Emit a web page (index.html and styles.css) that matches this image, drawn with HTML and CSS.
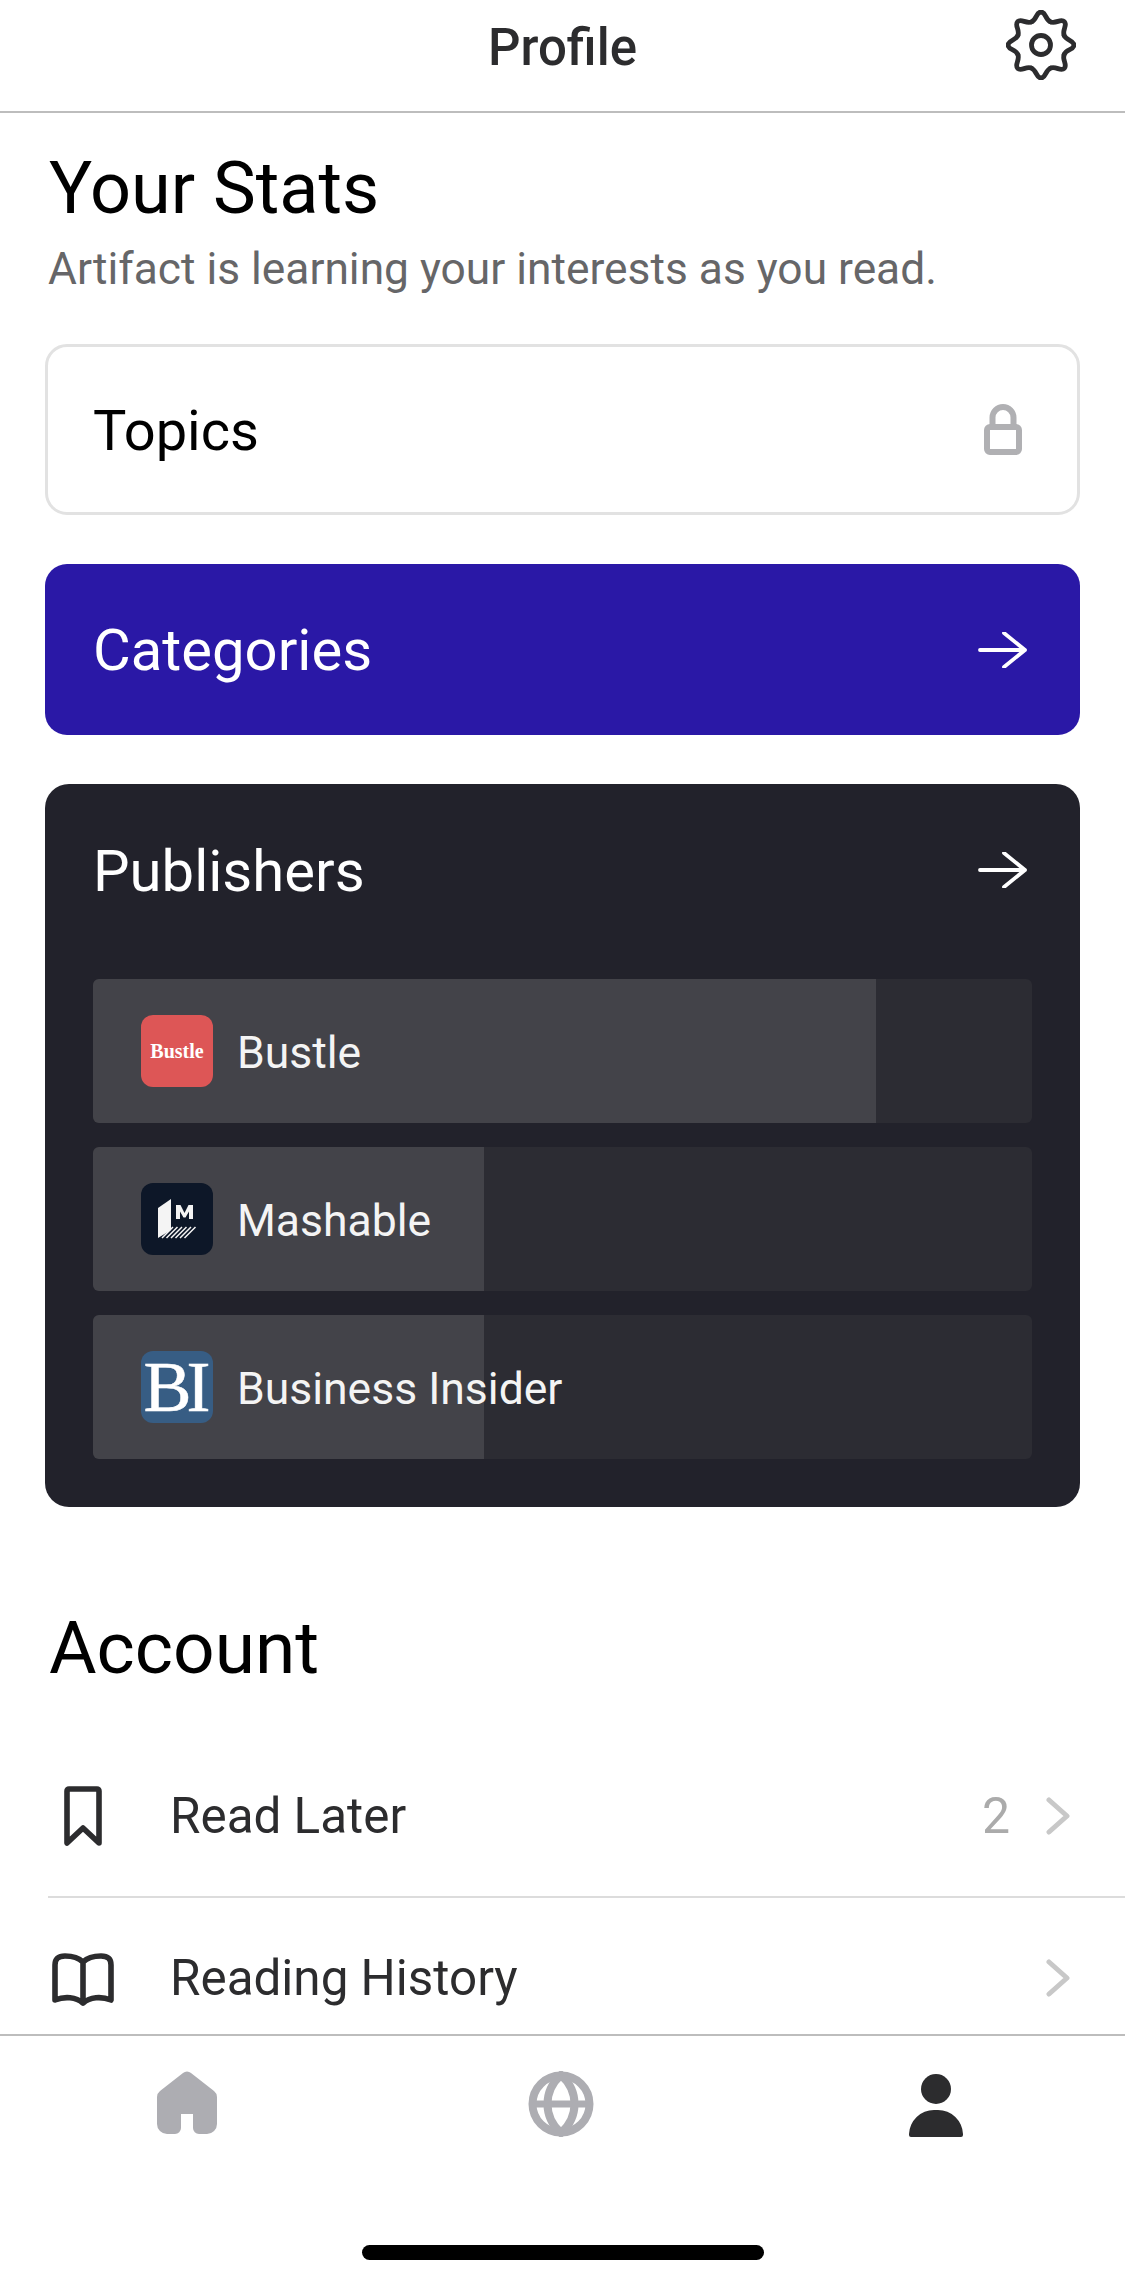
FILE: index.html
```html
<!DOCTYPE html>
<html lang="en">
<head>
    <meta charset="UTF-8">
    <meta name="viewport" content="width=device-width, initial-scale=1.0">
    <title>Profile</title>
    <link rel="stylesheet" href="styles.css">
</head>
<body>
    <div class="app">
        <header class="top-bar">
            <h2>Profile</h2>
            <svg class="gear-icon" viewBox="0 0 70 70" fill="none" stroke="#2c2c2e" stroke-width="4.8" stroke-linecap="round">
                <defs>
                    <path id="gearTooth" d="M25.4 11.9C30.9 9.6 30 2 35 2C40 2 39.1 9.6 44.6 11.9"/>
                </defs>
                <use href="#gearTooth"/>
                <use href="#gearTooth" transform="rotate(45 35 35)"/>
                <use href="#gearTooth" transform="rotate(90 35 35)"/>
                <use href="#gearTooth" transform="rotate(135 35 35)"/>
                <use href="#gearTooth" transform="rotate(180 35 35)"/>
                <use href="#gearTooth" transform="rotate(225 35 35)"/>
                <use href="#gearTooth" transform="rotate(270 35 35)"/>
                <use href="#gearTooth" transform="rotate(315 35 35)"/>
                <circle cx="35" cy="35" r="9.5"/>
            </svg>
        </header>

        <main class="content">
            <h1 class="stats-title">Your Stats</h1>
            <p class="stats-sub">Artifact is learning your interests as you read.</p>

            <div class="card card-topics">
                <span>Topics</span>
                <svg class="lock-icon" viewBox="0 0 38 52" fill="none" stroke="#b0b0b3" stroke-width="6" stroke-linejoin="round">
                    <path d="M8.5 23V13.5a10.5 10.5 0 0 1 21 0V23"/>
                    <rect x="3" y="23" width="32" height="25" rx="3"/>
                </svg>
            </div>

            <div class="card card-categories">
                <span>Categories</span>
                <svg class="arrow-icon" viewBox="0 0 50 36" fill="none" stroke="#fff" stroke-width="3.8" stroke-linecap="round" stroke-linejoin="round">
                    <path d="M2 18H47M26 1L47 18L26 35"/>
                </svg>
            </div>

            <div class="publishers">
                <div class="publishers-head">
                    <span>Publishers</span>
                    <svg class="arrow-icon" viewBox="0 0 50 36" fill="none" stroke="#fff" stroke-width="3.8" stroke-linecap="round" stroke-linejoin="round">
                        <path d="M2 18H47M26 1L47 18L26 35"/>
                    </svg>
                </div>

                <div class="pub-row">
                    <div class="pub-fill" style="width: 783px"></div>
                    <div class="pub-logo logo-bustle">Bustle</div>
                    <span class="pub-name">Bustle</span>
                </div>
                <div class="pub-row">
                    <div class="pub-fill" style="width: 391px"></div>
                    <div class="pub-logo logo-mashable">
                        <svg viewBox="0 0 72 72" width="72" height="72">
                            <path d="M17 25L30 16V47L17 55Z" fill="#f4f4f4"/>
                            <path d="M35 22H39.5L43.5 30L47.5 22H52V36H48V28.5L44.5 34.5H42.5L39 28.5V36H35Z" fill="#f4f4f4"/>
                            <path d="M21 55L32 44M25.5 55L36.5 44M30 55L41 44M34.5 55L45.5 44M39 55L50 44M43.5 55L54.5 44" stroke="#f4f4f4" stroke-width="1.5"/>
                        </svg>
                    </div>
                    <span class="pub-name">Mashable</span>
                </div>
                <div class="pub-row">
                    <div class="pub-fill" style="width: 391px"></div>
                    <div class="pub-logo logo-bi">BI</div>
                    <span class="pub-name">Business Insider</span>
                </div>
            </div>

            <h1 class="account-title">Account</h1>

            <div class="account-list">
                <div class="list-row">
                    <svg class="row-icon" viewBox="0 0 62 62" fill="none" stroke="#2c2c2e" stroke-width="5.6" stroke-linejoin="round">
                        <path d="M17 4H45a2 2 0 0 1 2 2V58L31 43L15 58V6a2 2 0 0 1 2-2Z"/>
                    </svg>
                    <span class="row-label">Read Later</span>
                    <span class="row-count">2</span>
                    <svg class="chevron" viewBox="0 0 24 38" fill="none" stroke="#c8c8c8" stroke-width="5" stroke-linecap="round" stroke-linejoin="round">
                        <path d="M3 3L21 19L3 35"/>
                    </svg>
                </div>
                <div class="list-row">
                    <svg class="row-icon" viewBox="0 0 62 62" fill="none" stroke="#2c2c2e" stroke-width="5.6" stroke-linejoin="round">
                        <path d="M31 15C27 11 21 9 13 9C6 9 3 12 3 18V53C13 49 24 50 31 56C38 50 49 49 59 53V18C59 12 56 9 49 9C41 9 35 11 31 15ZM31 15V54"/>
                    </svg>
                    <span class="row-label">Reading History</span>
                    <svg class="chevron" viewBox="0 0 24 38" fill="none" stroke="#c8c8c8" stroke-width="5" stroke-linecap="round" stroke-linejoin="round">
                        <path d="M3 3L21 19L3 35"/>
                    </svg>
                </div>
            </div>
        </main>

        <nav class="tab-bar">
            <div class="tabs">
                <div class="tab">
                    <svg class="tab-icon icon-home" viewBox="0 0 60 63" fill="#adadb2">
                        <path d="M26 2a6 6 0 0 1 8 0L57 20a8 8 0 0 1 3 6V53a10 10 0 0 1-10 10H42a6 6 0 0 1-6-6V43H24V57a6 6 0 0 1-6 6H10A10 10 0 0 1 0 53V26a8 8 0 0 1 3-6Z"/>
                    </svg>
                </div>
                <div class="tab">
                    <svg class="tab-icon" viewBox="0 0 66 66" fill="none" stroke="#adadb2" stroke-width="8">
                        <circle cx="33" cy="33" r="28.5"/>
                        <path d="M33 4C15 20 15 46 33 62C51 46 51 20 33 4Z"/>
                        <path d="M4 33H62" stroke-width="7"/>
                    </svg>
                </div>
                <div class="tab">
                    <svg class="tab-icon" viewBox="0 0 54 66" fill="#2c2c2e">
                        <circle cx="27" cy="18" r="15"/>
                        <path d="M0 63a25 25 0 0 1 25-24h4a25 25 0 0 1 25 24v1a2 2 0 0 1-2 2H2a2 2 0 0 1-2-2Z"/>
                    </svg>
                </div>
            </div>
            <div class="home-bar"></div>
        </nav>
    </div>
</body>
</html>
```

FILE: styles.css
```css
* {
  margin: 0;
  padding: 0;
  box-sizing: border-box;
  font-family: Roboto, "Liberation Sans", sans-serif;
}

body {
  background-color: #fff;
}

.app {
  width: 1125px;
  height: 2284px;
  display: flex;
  flex-direction: column;
  overflow: hidden;
}

.top-bar {
  height: 113px;
  flex-shrink: 0;
  display: flex;
  align-items: center;
  justify-content: center;
  position: relative;
  padding-bottom: 16px;
  border-bottom: 2px solid #bdbdbd;
}

.top-bar h2 {
  font-size: 51px;
  font-weight: 500;
  color: #2c2c2e;
}

.gear-icon {
  position: absolute;
  right: 49px;
  top: 10px;
  width: 70px;
  height: 70px;
}

.content {
  flex: 1;
  overflow: hidden;
  padding: 0 45px;
}

.stats-title {
  font-size: 72px;
  font-weight: 400;
  color: #000;
  line-height: 80px;
  margin-top: 36px;
  padding-left: 4px;
}

.stats-sub {
  font-size: 44.3px;
  color: #666668;
  line-height: 56px;
  margin-top: 12px;
  padding-left: 3px;
}

.card {
  height: 171px;
  border-radius: 22px;
  display: flex;
  align-items: center;
  justify-content: space-between;
  padding: 0 48px;
  font-size: 58px;
}

.card-topics {
  margin-top: 47px;
  padding-left: 45px;
  padding-top: 2px;
  border: 3px solid #e2e2e2;
  color: #000;
  font-size: 56px;
}

.lock-icon {
  width: 38px;
  height: 52px;
  margin-right: 7px;
  margin-bottom: 2px;
}

.card-categories {
  margin-top: 49px;
  background-color: #2a18a6;
  color: #fff;
}

.arrow-icon {
  width: 50px;
  height: 36px;
  margin-right: 4px;
}

.publishers {
  margin-top: 49px;
  height: 723px;
  background-color: #22222b;
  border-radius: 24px;
  padding: 0 48px;
  color: #fff;
}

.publishers-head {
  height: 171px;
  display: flex;
  align-items: center;
  justify-content: space-between;
  font-size: 58px;
  margin-bottom: 24px;
}

.publishers-head span {
  padding-top: 2px;
}

.pub-row {
  height: 144px;
  margin-bottom: 24px;
  background-color: #2c2c33;
  border-radius: 6px;
  display: flex;
  align-items: center;
  padding-left: 48px;
  position: relative;
  overflow: hidden;
}

.pub-fill {
  position: absolute;
  left: 0;
  top: 0;
  bottom: 0;
  background-color: #434349;
}

.pub-logo {
  width: 72px;
  height: 72px;
  border-radius: 12px;
  position: relative;
  flex-shrink: 0;
  display: flex;
  align-items: center;
  justify-content: center;
  color: #fff;
}

.logo-bustle {
  background-color: #dd5656;
  font-family: "Liberation Serif", serif;
  font-weight: 700;
  font-size: 20px;
}

.logo-mashable {
  background-color: #0d1728;
}

/* heavy serif initials that nearly fill the tile */
.logo-bi {
  background-color: #375d84;
  font-family: "Liberation Serif", serif;
  font-size: 72px;
  line-height: 72px;
  letter-spacing: -5px;
  padding-right: 5px;
  -webkit-text-stroke: 0.5px #fff;
}

.pub-name {
  position: relative;
  margin-left: 24px;
  padding-top: 4px;
  font-size: 44.5px;
  color: #f4f4f4;
}

.account-title {
  font-size: 73px;
  font-weight: 400;
  color: #000;
  line-height: 80px;
  margin-top: 101px;
  padding-left: 4px;
}

.account-list {
  margin-top: 48px;
}

.list-row {
  height: 162px;
  display: flex;
  align-items: center;
  border-bottom: 2px solid #dcdcdc;
  color: #2c2c2e;
  margin-left: 3px;
  margin-right: -45px;
  padding-right: 55px;
}

.row-icon {
  width: 62px;
  height: 62px;
  margin-left: 4px;
  flex-shrink: 0;
}

.row-label {
  flex: 1;
  margin-left: 56px;
  font-size: 49.4px;
}

.row-count {
  font-size: 50px;
  color: #ababab;
  margin-right: 36px;
}

.chevron {
  width: 24px;
  height: 38px;
}

.tab-bar {
  height: 250px;
  flex-shrink: 0;
  border-top: 2px solid #bdbdbd;
  display: flex;
  flex-direction: column;
  align-items: center;
  background-color: #fff;
}

.tabs {
  width: 100%;
  display: grid;
  grid-template-columns: 1fr 1fr 1fr;
  padding-top: 35px;
  padding-right: 2px;
}

.tab {
  display: flex;
  justify-content: center;
}

.tab-icon {
  height: 66px;
}

.icon-home {
  height: 63px;
}

.home-bar {
  width: 402px;
  height: 15px;
  margin-top: auto;
  margin-bottom: 24px;
  border-radius: 8px;
  background-color: #000;
}
```
